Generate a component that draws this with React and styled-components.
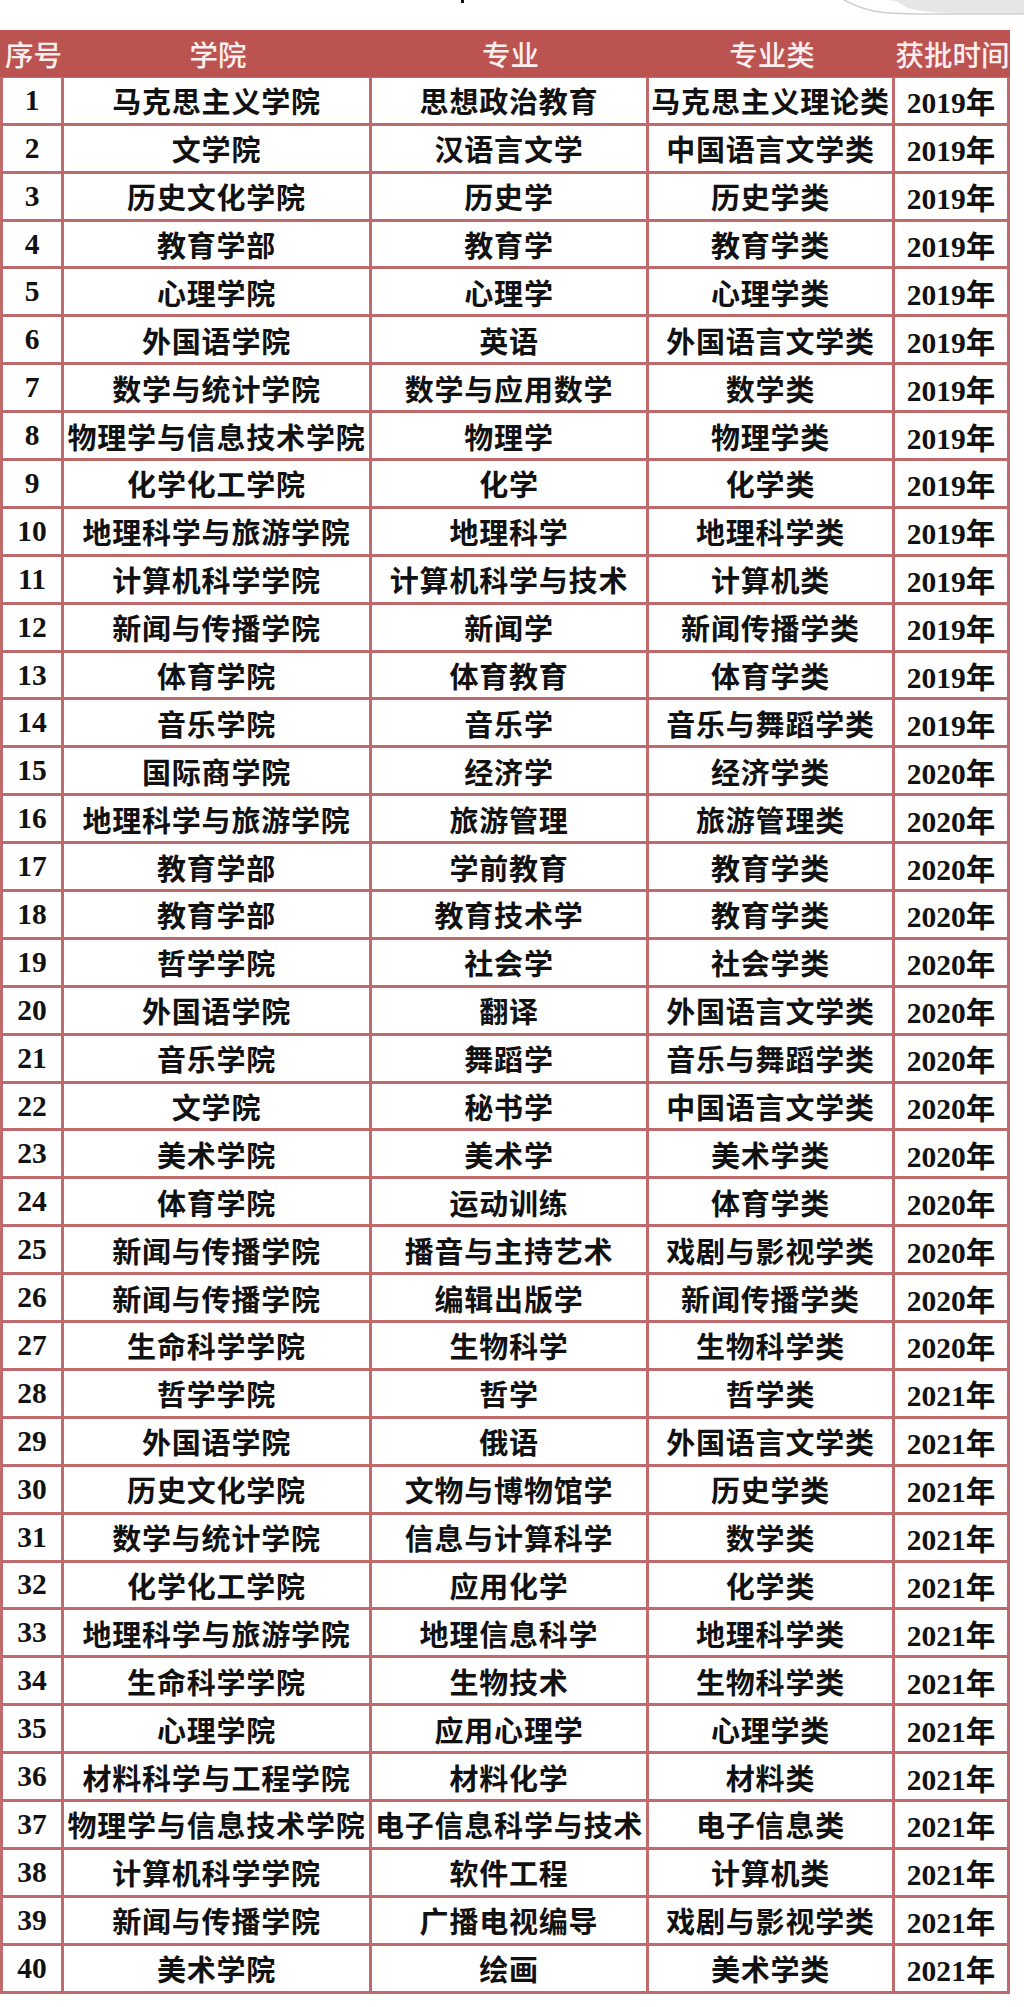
import React from 'react';
import styled, { createGlobalStyle } from 'styled-components';

const GlobalStyle = createGlobalStyle`
  html, body {
    margin: 0;
    padding: 0;
    background: #ffffff;
  }
  body {
    font-family: "Noto Sans CJK SC", "Noto Sans", sans-serif;
  }
`;

const LINE = '#c06a6b';
const HEAD = '#bb5350';

const Page = styled.div`
  position: relative;
  width: 1024px;
  height: 2007px;
  background: #ffffff;
  overflow: hidden;
`;

const TopStrip = styled.div`
  height: 30px;
  position: relative;
`;

const Tick = styled.span`
  position: absolute;
  left: 461px;
  top: 0;
  width: 3px;
  height: 3px;
  background: #111;
`;

const Curve = styled.svg`
  position: absolute;
  right: 0;
  top: 0;
`;

const Table = styled.div`
  width: 1010px;
  background: ${LINE};
  padding: 0 3px 3px 0;
  box-sizing: border-box;
  display: grid;
  grid-template-columns: 61px 305px 274px 243px 112px;
  grid-auto-rows: 44.9px;
  column-gap: 3px;
  row-gap: 3px;
`;

const HeadCell = styled.div`
  background: ${HEAD};
  color: #fbeeee;
  font-family: "Noto Sans CJK SC", sans-serif;
  font-weight: 500;
  font-size: 28.5px;
  display: flex;
  align-items: center;
  justify-content: center;
  white-space: nowrap;
  height: 47px;
  margin-right: -3px;
  padding-left: ${(p) => (p.$first ? '3px' : '0')};
  box-sizing: border-box;
`;

const Cell = styled.div`
  background: #ffffff;
  color: #111111;
  display: flex;
  align-items: center;
  justify-content: center;
  white-space: nowrap;
  font-family: ${(p) =>
    p.$serif
      ? '"Liberation Serif", "Noto Sans CJK SC", serif'
      : '"Noto Sans CJK SC", sans-serif'};
  font-weight: ${(p) => (p.$serif ? 700 : 600)};
  font-size: ${(p) => (p.$serif ? '29.5px' : '29px')};
  letter-spacing: ${(p) => (p.$serif ? '0' : '0.8px')};
  margin-left: ${(p) => (p.$first ? '3px' : '0')};
`;

const HeadRow = styled.div`
  display: contents;
`;

const heads = ['序号', '学院', '专业', '专业类', '获批时间'];

const rows = [
  ['马克思主义学院', '思想政治教育', '马克思主义理论类', '2019年'],
  ['文学院', '汉语言文学', '中国语言文学类', '2019年'],
  ['历史文化学院', '历史学', '历史学类', '2019年'],
  ['教育学部', '教育学', '教育学类', '2019年'],
  ['心理学院', '心理学', '心理学类', '2019年'],
  ['外国语学院', '英语', '外国语言文学类', '2019年'],
  ['数学与统计学院', '数学与应用数学', '数学类', '2019年'],
  ['物理学与信息技术学院', '物理学', '物理学类', '2019年'],
  ['化学化工学院', '化学', '化学类', '2019年'],
  ['地理科学与旅游学院', '地理科学', '地理科学类', '2019年'],
  ['计算机科学学院', '计算机科学与技术', '计算机类', '2019年'],
  ['新闻与传播学院', '新闻学', '新闻传播学类', '2019年'],
  ['体育学院', '体育教育', '体育学类', '2019年'],
  ['音乐学院', '音乐学', '音乐与舞蹈学类', '2019年'],
  ['国际商学院', '经济学', '经济学类', '2020年'],
  ['地理科学与旅游学院', '旅游管理', '旅游管理类', '2020年'],
  ['教育学部', '学前教育', '教育学类', '2020年'],
  ['教育学部', '教育技术学', '教育学类', '2020年'],
  ['哲学学院', '社会学', '社会学类', '2020年'],
  ['外国语学院', '翻译', '外国语言文学类', '2020年'],
  ['音乐学院', '舞蹈学', '音乐与舞蹈学类', '2020年'],
  ['文学院', '秘书学', '中国语言文学类', '2020年'],
  ['美术学院', '美术学', '美术学类', '2020年'],
  ['体育学院', '运动训练', '体育学类', '2020年'],
  ['新闻与传播学院', '播音与主持艺术', '戏剧与影视学类', '2020年'],
  ['新闻与传播学院', '编辑出版学', '新闻传播学类', '2020年'],
  ['生命科学学院', '生物科学', '生物科学类', '2020年'],
  ['哲学学院', '哲学', '哲学类', '2021年'],
  ['外国语学院', '俄语', '外国语言文学类', '2021年'],
  ['历史文化学院', '文物与博物馆学', '历史学类', '2021年'],
  ['数学与统计学院', '信息与计算科学', '数学类', '2021年'],
  ['化学化工学院', '应用化学', '化学类', '2021年'],
  ['地理科学与旅游学院', '地理信息科学', '地理科学类', '2021年'],
  ['生命科学学院', '生物技术', '生物科学类', '2021年'],
  ['心理学院', '应用心理学', '心理学类', '2021年'],
  ['材料科学与工程学院', '材料化学', '材料类', '2021年'],
  ['物理学与信息技术学院', '电子信息科学与技术', '电子信息类', '2021年'],
  ['计算机科学学院', '软件工程', '计算机类', '2021年'],
  ['新闻与传播学院', '广播电视编导', '戏剧与影视学类', '2021年'],
  ['美术学院', '绘画', '美术学类', '2021年'],
];

export default function App() {
  return (
    <Page>
      <GlobalStyle />
      <TopStrip>
        <Tick />
        <Curve width="330" height="22" viewBox="0 0 330 22">
          <defs>
            <linearGradient id="fade" x1="0" x2="1" y1="0" y2="0">
              <stop offset="0" stopColor="#e4e4e4" stopOpacity="0" />
              <stop offset="0.5" stopColor="#e0e0e0" stopOpacity="0.8" />
              <stop offset="1" stopColor="#e6e6e6" />
            </linearGradient>
          </defs>
          <path d="M0 0 H330 V14 C280 14 220 14 210 6 C205 2 200 0 190 0 Z" fill="url(#fade)" />
          <path d="M150 0 C170 10 180 14 230 14 H330" stroke="#cfcfcf" strokeWidth="1.5" fill="none" />
        </Curve>
      </TopStrip>
      <Table>
        <HeadRow>
          {heads.map((h, i) => (
            <HeadCell key={h} $first={i === 0}>
              {h}
            </HeadCell>
          ))}
        </HeadRow>
        {rows.map((r, i) => (
          <React.Fragment key={i}>
            <Cell $serif $first>
              {i + 1}
            </Cell>
            <Cell>{r[0]}</Cell>
            <Cell>{r[1]}</Cell>
            <Cell>{r[2]}</Cell>
            <Cell $serif>{r[3]}</Cell>
          </React.Fragment>
        ))}
      </Table>
    </Page>
  );
}
